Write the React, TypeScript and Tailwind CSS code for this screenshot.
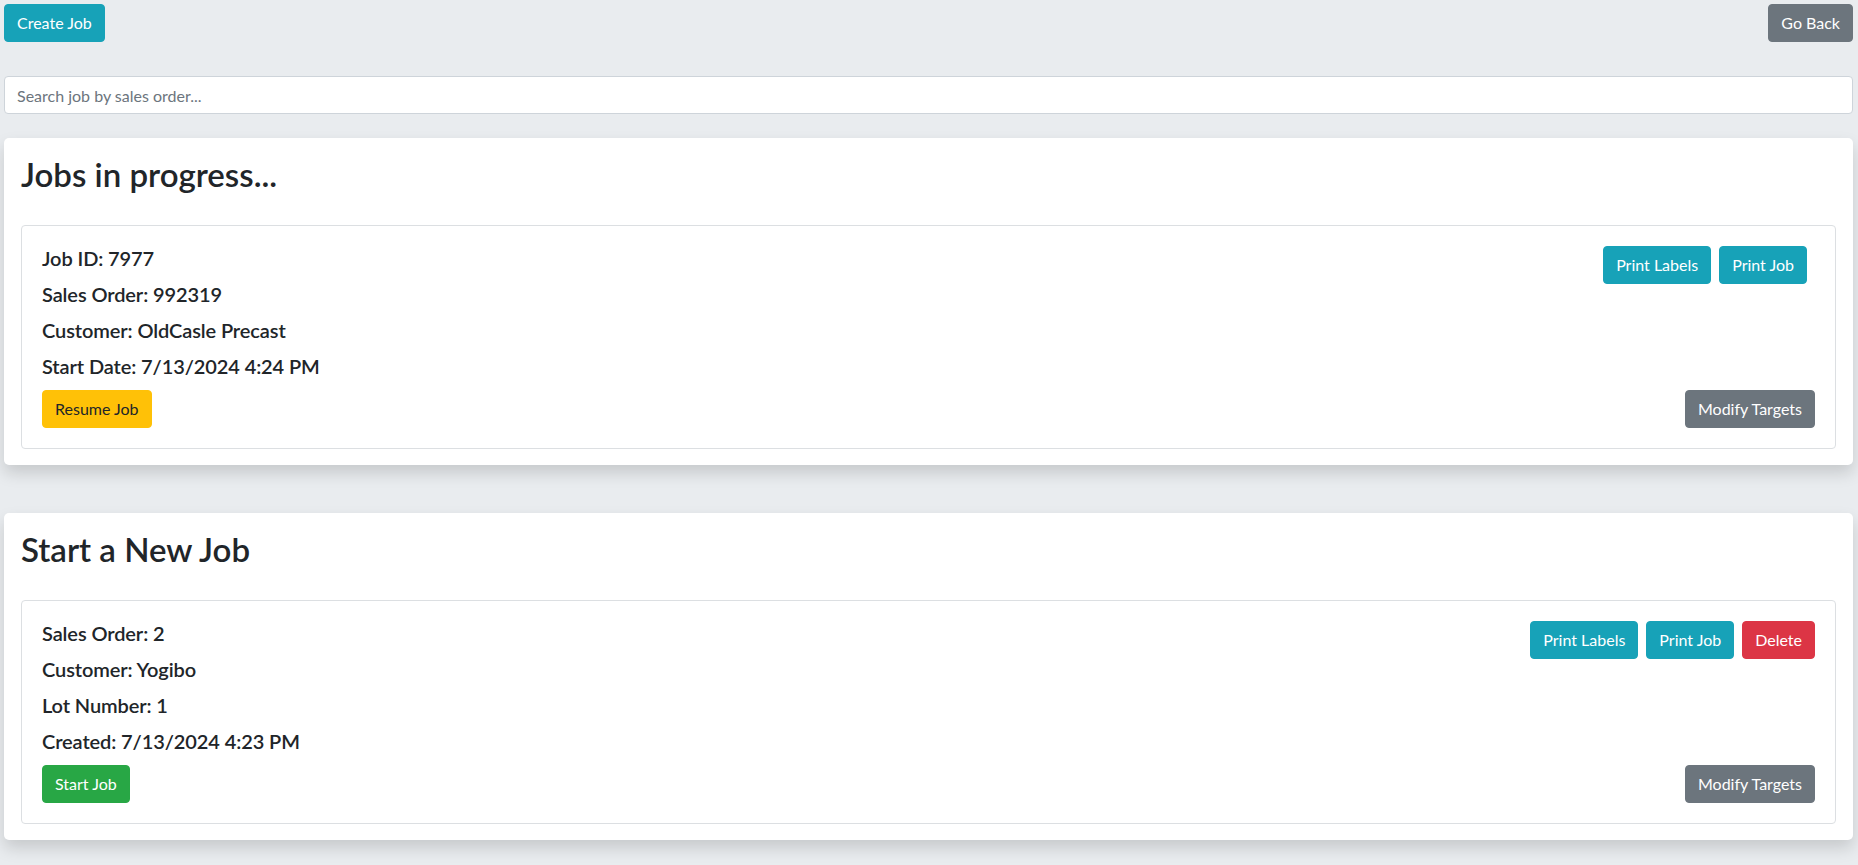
import React from 'react';

type Btn = { label: string; tone: 'info' | 'secondary' | 'warning' | 'success' | 'danger'; className?: string };

const toneClass: Record<Btn['tone'], string> = {
  info: 'bg-[#17a2b8] border-[#17a2b8] text-white',
  secondary: 'bg-[#6c757d] border-[#6c757d] text-white',
  warning: 'bg-[#ffc107] border-[#ffc107] text-[#212529]',
  success: 'bg-[#28a745] border-[#28a745] text-white',
  danger: 'bg-[#dc3545] border-[#dc3545] text-white',
};

const Button: React.FC<Btn> = ({ label, tone, className = '' }) => (
  <button
    type="button"
    className={`${toneClass[tone]} ${className} h-[38px] rounded-[4px] border px-3 text-base leading-6 whitespace-nowrap`}
  >
    {label}
  </button>
);

interface JobCardProps {
  lines: string[];
  mainAction: Btn;
  topActions: Btn[];
}

const JobCard: React.FC<JobCardProps> = ({ lines, mainAction, topActions }) => (
  <div className="flex justify-between rounded-[4px] border border-[#dcdfe2] bg-white p-5">
    <div className="flex flex-col">
      {lines.map((line) => (
        <h5 key={line} className="mb-3 text-[20px] font-semibold leading-6 tracking-[-0.1px] text-[#212529]">
          {line}
        </h5>
      ))}
      <div>
        <Button {...mainAction} />
      </div>
    </div>
    <div className="flex flex-col items-end justify-between">
      <div className="flex">
        {topActions.map((a) => (
          <Button key={a.label} {...a} />
        ))}
      </div>
      <Button label="Modify Targets" tone="secondary" />
    </div>
  </div>
);

const Section: React.FC<{ title: string; className?: string; children: React.ReactNode }> = ({ title, className = '', children }) => (
  <div className={`${className} rounded-[5px] bg-white px-[17px] pt-[17px] pb-4 shadow-[0_0.5rem_1rem_rgba(0,0,0,0.15)]`}>
    <h2 className="mb-8 text-[33px] font-semibold leading-[38px] text-[#212529]">{title}</h2>
    {children}
  </div>
);

export default function App() {
  return (
    <div className="min-h-screen bg-[#e9ecef] pt-1 pr-[5px] pl-1 pb-8 font-['Lato',sans-serif] text-[#212529]">
      <div className="flex justify-between">
        <Button label="Create Job" tone="info" />
        <Button label="Go Back" tone="secondary" />
      </div>

      <input
        type="text"
        placeholder="Search job by sales order..."
        className="mt-[34px] block h-[38px] w-full rounded-[4px] border border-[#ced4da] bg-white px-3 text-base leading-6 text-[#495057] placeholder:text-[#6c757d] outline-none"
      />

      <Section title="Jobs in progress..." className="mt-6">
        <JobCard
          lines={['Job ID: 7977', 'Sales Order: 992319', 'Customer: OldCasle Precast', 'Start Date: 7/13/2024 4:24 PM']}
          mainAction={{ label: 'Resume Job', tone: 'warning' }}
          topActions={[
            { label: 'Print Labels', tone: 'info', className: 'mr-2' },
            { label: 'Print Job', tone: 'info', className: 'mr-2' },
          ]}
        />
      </Section>

      <Section title="Start a New Job" className="mt-12">
        <JobCard
          lines={['Sales Order: 2', 'Customer: Yogibo', 'Lot Number: 1', 'Created: 7/13/2024 4:23 PM']}
          mainAction={{ label: 'Start Job', tone: 'success' }}
          topActions={[
            { label: 'Print Labels', tone: 'info', className: 'mr-2' },
            { label: 'Print Job', tone: 'info', className: 'mr-2' },
            { label: 'Delete', tone: 'danger' },
          ]}
        />
      </Section>
    </div>
  );
}
